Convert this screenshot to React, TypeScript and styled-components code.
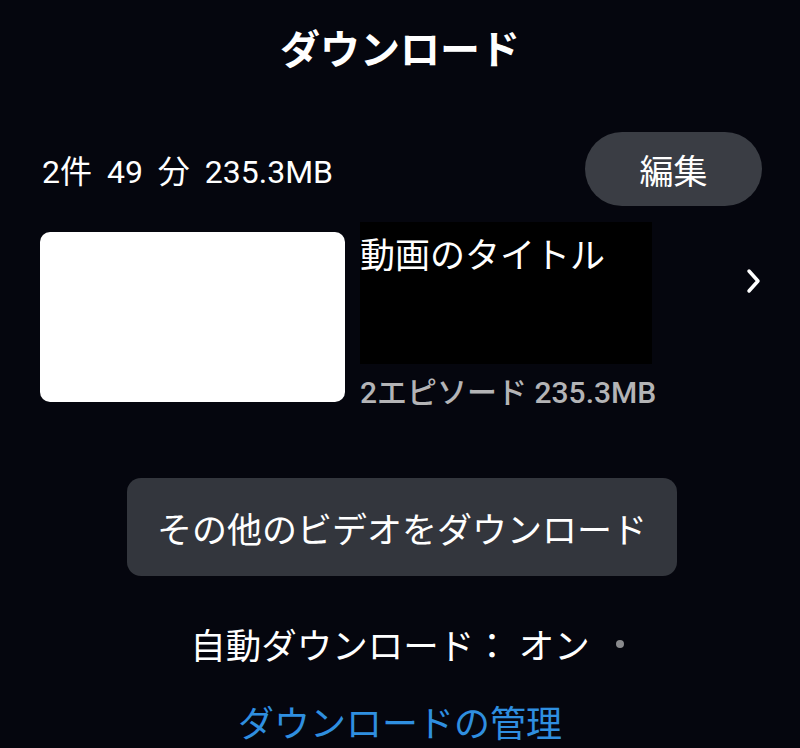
import React from 'react'
import styled, { createGlobalStyle } from 'styled-components'

const GlobalStyle = createGlobalStyle`
    html, body {
        margin: 0;
        padding: 0;
        background: #05060e;
    }
    body {
        font-family: Roboto, "Noto Sans CJK JP", sans-serif;
        color: #ffffff;
    }
`

const Screen = styled.div`
    width: 800px;
    height: 748px;
    overflow: hidden;
    background: #05060e;
    display: flex;
    flex-direction: column;
`

const Header = styled.h1`
    margin: 0;
    height: 94px;
    display: flex;
    align-items: center;
    justify-content: center;
    font-size: 40px;
    font-weight: 700;
`

const StatsRow = styled.div`
    display: flex;
    align-items: center;
    justify-content: space-between;
    margin-top: 38px;
    padding: 0 38px 0 42px;
    height: 74px;
`

const Stats = styled.span`
    font-size: 32px;
    word-spacing: 7px;
`

const PillButton = styled.button`
    width: 177px;
    height: 74px;
    border: none;
    border-radius: 37px;
    background: #3a3d44;
    color: #ffffff;
    font-family: inherit;
    font-size: 34px;
`

const ItemRow = styled.div`
    display: flex;
    align-items: flex-start;
    margin-top: 16px;
    padding: 0 38px 0 40px;
`

const Thumb = styled.div`
    width: 305px;
    height: 170px;
    margin-top: 10px;
    border-radius: 10px;
    background: #ffffff;
    flex-shrink: 0;
`

const Info = styled.div`
    display: flex;
    flex-direction: column;
    margin-left: 15px;
    width: 310px;
`

const TitleBox = styled.div`
    width: 292px;
    height: 142px;
    background: #000000;
    font-size: 35px;
    line-height: 1;
    padding-top: 17px;
    box-sizing: border-box;
`

const Sub = styled.div`
    margin-top: 4px;
    font-size: 30px;
    font-weight: 500;
    color: #b4b4b6;
    white-space: nowrap;
`

const Chevron = styled.div`
    margin-left: auto;
    margin-top: 46px;
    display: flex;
`

const WideButton = styled.button`
    align-self: center;
    margin-top: 66px;
    margin-left: 4px;
    width: 550px;
    height: 98px;
    border: none;
    border-radius: 14px;
    background: #33363d;
    color: #ffffff;
    font-family: inherit;
    font-size: 35px;
`

const AutoLine = styled.div`
    margin-top: 42px;
    display: flex;
    align-items: center;
    justify-content: center;
    gap: 26px;
    font-size: 35.5px;
    padding-left: 14px;
`

const Dot = styled.span`
    width: 8px;
    height: 8px;
    border-radius: 50%;
    background: #8a8a8d;
`

const Link = styled.a`
    margin-top: 26px;
    text-align: center;
    font-size: 36px;
    color: #2f8fe0;
    text-decoration: none;
`

export default function App() {
    return (
        <Screen>
            <GlobalStyle />
            <Header>ダウンロード</Header>
            <StatsRow>
                <Stats>2件 49 分 235.3MB</Stats>
                <PillButton>編集</PillButton>
            </StatsRow>
            <ItemRow>
                <Thumb />
                <Info>
                    <TitleBox>動画のタイトル</TitleBox>
                    <Sub>2エピソード 235.3MB</Sub>
                </Info>
                <Chevron>
                    <svg width="16" height="26" viewBox="0 0 16 26">
                        <path d="M3 3 L12 13 L3 23" fill="none" stroke="#fff" strokeWidth="3.5" strokeLinecap="round" strokeLinejoin="round" />
                    </svg>
                </Chevron>
            </ItemRow>
            <WideButton>その他のビデオをダウンロード</WideButton>
            <AutoLine>
                <span>自動ダウンロード： オン</span>
                <Dot />
            </AutoLine>
            <Link>ダウンロードの管理</Link>
        </Screen>
    )
}
